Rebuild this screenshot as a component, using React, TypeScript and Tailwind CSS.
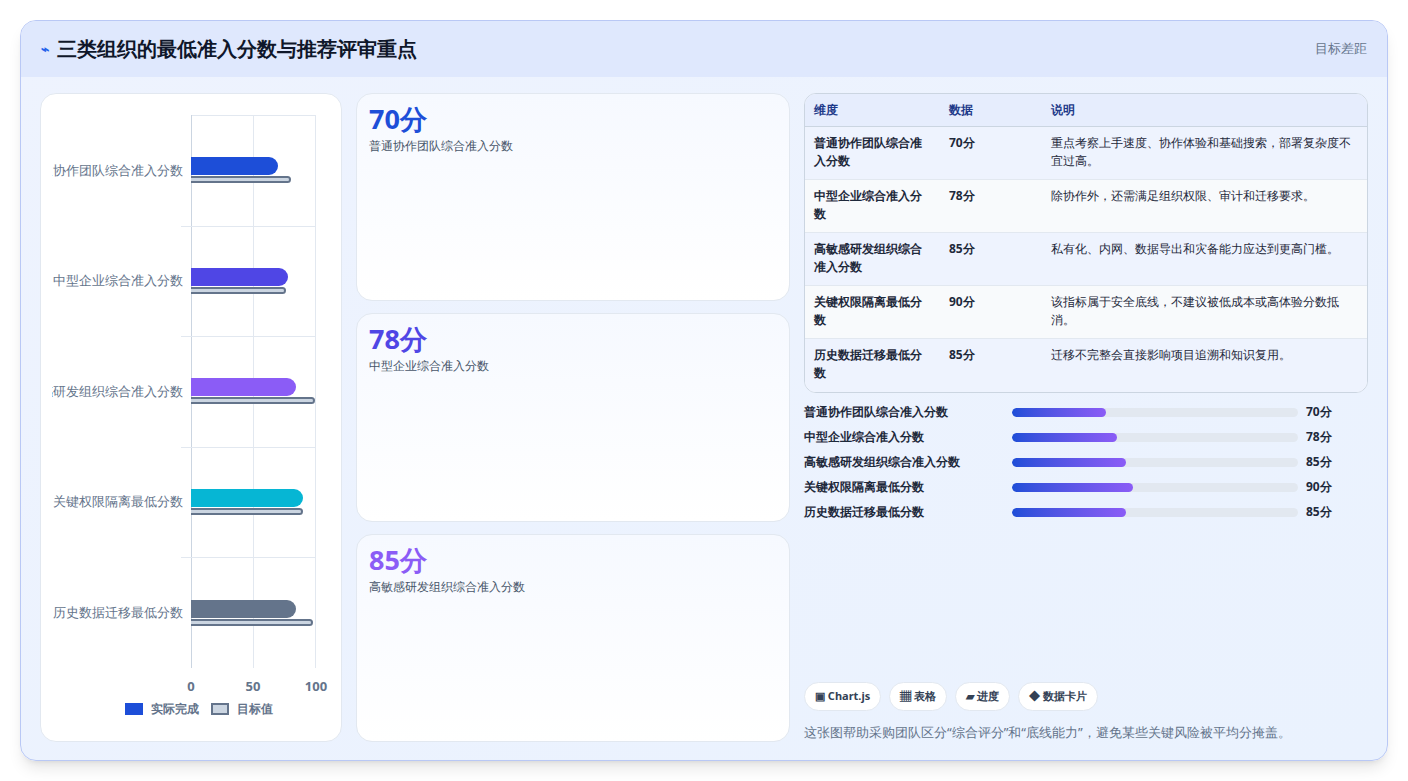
const rows = [
  { label: "普通协作团队综合准入分数", v: 70, t: 81, c: "#1d4ed8", text: "重点考察上手速度、协作体验和基础搜索，部署复杂度不宜过高。" },
  { label: "中型企业综合准入分数", v: 78, t: 77, c: "#4f46e5", text: "除协作外，还需满足组织权限、审计和迁移要求。" },
  { label: "高敏感研发组织综合准入分数", v: 85, t: 100, c: "#8b5cf6", text: "私有化、内网、数据导出和灾备能力应达到更高门槛。" },
  { label: "关键权限隔离最低分数", v: 90, t: 90, c: "#06b6d4", text: "该指标属于安全底线，不建议被低成本或高体验分数抵消。" },
  { label: "历史数据迁移最低分数", v: 85, t: 98, c: "#64748b", text: "迁移不完整会直接影响项目追溯和知识复用。" },
];

const cards = [
  { n: "70分", l: "普通协作团队综合准入分数", c: "text-[#1d4ed8]" },
  { n: "78分", l: "中型企业综合准入分数", c: "text-[#4f46e5]" },
  { n: "85分", l: "高敏感研发组织综合准入分数", c: "text-[#8b5cf6]" },
];

export default function App() {
  return (
    <div className="w-[1408px] h-[781px] bg-white p-5 pb-5 font-['Liberation_Sans','Noto_Sans_CJK_SC',sans-serif]">
      <div className="h-[741px] rounded-2xl border border-[#b9c8f5] bg-gradient-to-br from-[#eef3fe] to-[#eaf2fe] overflow-hidden shadow-lg flex flex-col">
        <div className="h-[56px] shrink-0 bg-[#dfe8fd] flex items-center justify-between px-5">
          <div className="flex items-center gap-2">
            <span className="text-[#2563eb] text-sm font-bold">⌁</span>
            <h1 className="text-[20px] font-bold text-[#0f172a]">三类组织的最低准入分数与推荐评审重点</h1>
          </div>
          <span className="text-[13px] text-[#64748b]">目标差距</span>
        </div>
        <div className="flex-1 flex gap-[14px] px-[19px] pt-[16px] pb-[18px]">
          {/* chart */}
          <div className="w-[302px] bg-white rounded-2xl border border-[#e2e8f0] flex flex-col pt-[21px] pb-[20px]">
            <div className="relative flex-1 flex flex-col">
              <div className="relative h-[553px] flex flex-col">
                <div className="absolute top-0 bottom-0 left-[150px] w-[125px] border-l border-[#cbd5e1]">
                  <div className="absolute top-0 bottom-0 left-[61px] border-l border-[#e2e8f0]" />
                  <div className="absolute top-0 bottom-0 right-0 border-l border-[#e2e8f0]" />
                  <div className="absolute top-0 left-0 right-0 border-t border-[#e2e8f0]" />
                </div>
                {rows.map((r, i) => (
                  <div key={i} className="flex-1 flex items-center relative">
                    {i > 0 && <div className="absolute top-0 left-[140px] w-[135px] border-t border-[#e2e8f0]" />}
                    <div className="ml-[11px] w-[131px] overflow-hidden flex justify-end">
                      <span className="whitespace-nowrap text-[13px] text-[#64748b]">{r.label}</span>
                    </div>
                    <div className="ml-[8px] flex flex-col gap-[1px] relative">
                      <div className="h-[18px] rounded-r-[9px]" style={{ width: r.v * 1.24, background: r.c }} />
                      <div className="h-[7px] rounded-r-[4px] bg-[#cbd5e1] border-2 border-l-0 border-[#64748b]" style={{ width: r.t * 1.24 }} />
                    </div>
                  </div>
                ))}
              </div>
              <div className="relative h-[32px] ml-[150px] w-[125px] text-[13px] font-bold text-[#64748b]">
                <span className="absolute left-0 -translate-x-1/2 top-[9px]">0</span>
                <span className="absolute left-[62px] -translate-x-1/2 top-[9px]">50</span>
                <span className="absolute left-[125px] -translate-x-1/2 top-[9px]">100</span>
              </div>
              <div className="flex justify-center items-center gap-2 text-[12px] font-bold text-[#64748b] pl-4">
                <span className="w-[18px] h-[12px] bg-[#1d4ed8]" />实际完成
                <span className="w-[18px] h-[12px] bg-[#cbd5e1] border-2 border-[#64748b] ml-1" />目标值
              </div>
            </div>
          </div>
          {/* cards */}
          <div className="w-[434px] flex flex-col gap-[12px]">
            {cards.map((c, i) => (
              <div key={i} className="flex-1 rounded-2xl border border-[#e2e8f0] bg-gradient-to-b from-[#f6f9ff] to-white px-[12px] pt-[8px]">
                <div className={`text-[27px] font-bold leading-[34px] ${c.c}`}>{c.n}</div>
                <div className="text-[12px] text-[#475569] mt-[1px]">{c.l}</div>
              </div>
            ))}
          </div>
          {/* right */}
          <div className="flex-1 flex flex-col">
            <div className="rounded-xl border border-[#cbd5e1] overflow-hidden bg-white">
              <div className="flex h-[33px] items-center bg-[#e6edfd] text-[12px] font-bold text-[#1e3a8a] border-b border-[#cbd5e1]">
                <div className="w-[144px] pl-[9px]">维度</div>
                <div className="w-[102px]">数据</div>
                <div className="flex-1">说明</div>
              </div>
              {rows.map((r, i) => (
                <div key={i} className={`flex h-[53px] pt-[7px] text-[12px] leading-[18px] text-[#1e293b] ${i % 2 ? "bg-[#f8fafc]" : "bg-[#eef3fe]"} ${i < 4 ? "border-b border-[#e2e8f0]" : ""}`}>
                  <div className="w-[144px] pl-[9px] pr-[18px] font-bold">{r.label}</div>
                  <div className="w-[102px] font-bold">{r.v}分</div>
                  <div className="flex-1 pr-[14px]">{r.text}</div>
                </div>
              ))}
            </div>
            <div className="flex flex-col gap-[7px] mt-[10px]">
              {rows.map((r, i) => (
                <div key={i} className="flex items-center h-[18px] text-[12px] font-bold text-[#1e293b]">
                  <div className="w-[208px]">{r.label}</div>
                  <div className="w-[286px] h-[9px] rounded-full bg-[#e2e8f0] overflow-hidden">
                    <div className="h-full rounded-full bg-gradient-to-r from-[#1d4ed8] to-[#8b5cf6]" style={{ width: `${r.v * 0.47}%` }} />
                  </div>
                  <div className="ml-[8px]">{r.v}分</div>
                </div>
              ))}
            </div>
            <div className="mt-auto flex gap-[8px] text-[11px] font-bold text-[#334155]">
              {["▣ Chart.js", "▦ 表格", "▰ 进度", "◆ 数据卡片"].map((t) => (
                <span key={t} className="px-[10px] h-[29px] flex items-center rounded-full bg-white border border-[#e2e8f0]">{t}</span>
              ))}
            </div>
            <p className="mt-[12px] text-[13px] text-[#64748b]">这张图帮助采购团队区分“综合评分”和“底线能力”，避免某些关键风险被平均分掩盖。</p>
          </div>
        </div>
      </div>
    </div>
  );
}
